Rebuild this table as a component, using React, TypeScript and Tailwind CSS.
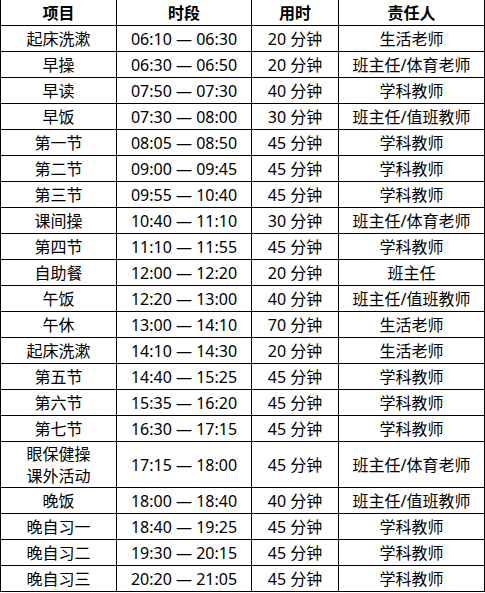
const rows: [string, string, string, string][] = [
  ['起床洗漱', '06:10 — 06:30', '20 分钟', '生活老师'],
  ['早操', '06:30 — 06:50', '20 分钟', '班主任/体育老师'],
  ['早读', '07:50 — 07:30', '40 分钟', '学科教师'],
  ['早饭', '07:30 — 08:00', '30 分钟', '班主任/值班教师'],
  ['第一节', '08:05 — 08:50', '45 分钟', '学科教师'],
  ['第二节', '09:00 — 09:45', '45 分钟', '学科教师'],
  ['第三节', '09:55 — 10:40', '45 分钟', '学科教师'],
  ['课间操', '10:40 — 11:10', '30 分钟', '班主任/体育老师'],
  ['第四节', '11:10 — 11:55', '45 分钟', '学科教师'],
  ['自助餐', '12:00 — 12:20', '20 分钟', '班主任'],
  ['午饭', '12:20 — 13:00', '40 分钟', '班主任/值班教师'],
  ['午休', '13:00 — 14:10', '70 分钟', '生活老师'],
  ['起床洗漱', '14:10 — 14:30', '20 分钟', '生活老师'],
  ['第五节', '14:40 — 15:25', '45 分钟', '学科教师'],
  ['第六节', '15:35 — 16:20', '45 分钟', '学科教师'],
  ['第七节', '16:30 — 17:15', '45 分钟', '学科教师'],
  ['眼保健操\n课外活动', '17:15 — 18:00', '45 分钟', '班主任/体育老师'],
  ['晚饭', '18:00 — 18:40', '40 分钟', '班主任/值班教师'],
  ['晚自习一', '18:40 — 19:25', '45 分钟', '学科教师'],
  ['晚自习二', '19:30 — 20:15', '45 分钟', '学科教师'],
  ['晚自习三', '20:20 — 21:05', '45 分钟', '学科教师'],
];

const cols = 'grid grid-cols-[116px_135px_87px_146px]';
const cell = 'flex items-center justify-center border-r border-b border-black text-center';

export default function App() {
  return (
    <div
      className="w-[485px] bg-white text-[16px] text-black"
      style={{ fontFamily: '"Noto Sans", "Noto Sans CJK SC", sans-serif' }}
    >
      <div className="border-l border-black">
        <div className={`${cols} h-[26px] font-bold`}>
          <div className={cell}>项目</div>
          <div className={cell}>时段</div>
          <div className={cell}>用时</div>
          <div className={cell}>责任人</div>
        </div>
        {rows.map((r, i) => {
          const tall = r[0].includes('\n');
          return (
            <div key={i} className={`${cols} ${tall ? 'h-[46px]' : 'h-[26px]'}`}>
              <div className={`${cell} whitespace-pre-line leading-[22px]`}>{r[0]}</div>
              <div className={cell}>{r[1]}</div>
              <div className={cell}>{r[2]}</div>
              <div className={cell}>{r[3]}</div>
            </div>
          );
        })}
      </div>
    </div>
  );
}
